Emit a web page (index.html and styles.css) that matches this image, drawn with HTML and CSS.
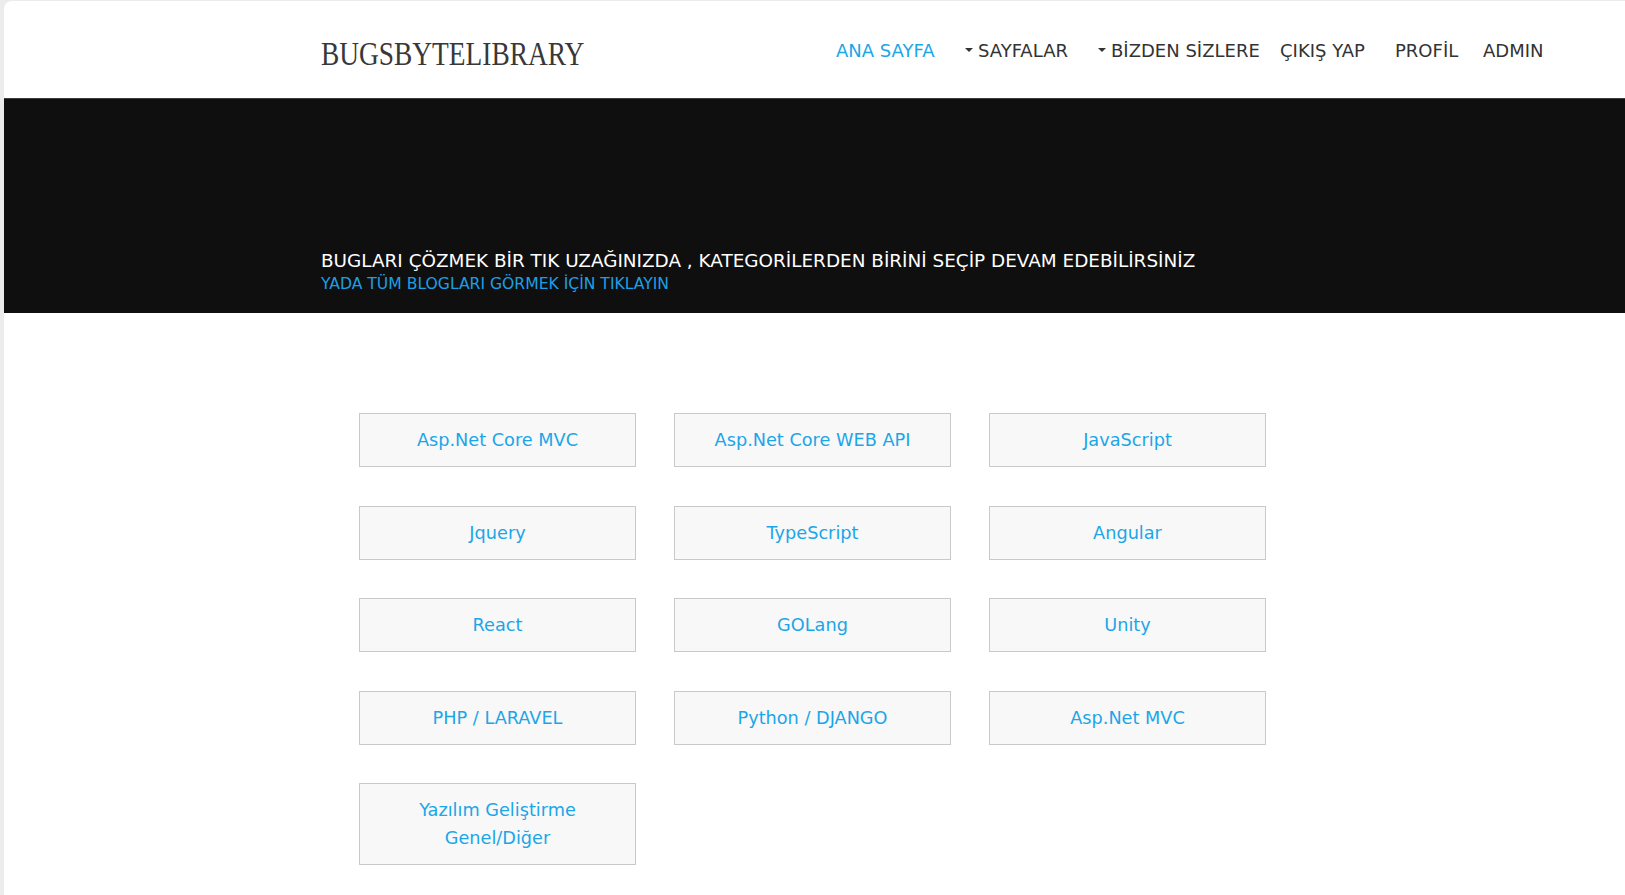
FILE: index.html
```html
<!DOCTYPE html>
<html lang="tr">
<head>
<meta charset="utf-8">
<title>BugsByteLibrary</title>
<link rel="stylesheet" href="styles.css">
</head>
<body>
<div class="page">
  <header class="topbar">
    <a class="logo" href="#"><span class="logo-text">BUGSBYTELIBRARY</span></a>
    <nav class="nav">
      <a class="nav-item nav-active w-home" href="#">ANA SAYFA</a>
      <a class="nav-item w-pages" href="#"><span class="caret"></span>SAYFALAR</a>
      <a class="nav-item w-us" href="#"><span class="caret"></span>BİZDEN SİZLERE</a>
      <a class="nav-item w-out" href="#">ÇIKIŞ YAP</a>
      <a class="nav-item w-prof" href="#">PROFİL</a>
      <a class="nav-item" href="#">ADMIN</a>
    </nav>
  </header>
  <section class="hero">
    <h1 class="hero-title">BUGLARI ÇÖZMEK BİR TIK UZAĞINIZDA , KATEGORİLERDEN BİRİNİ SEÇİP DEVAM EDEBİLİRSİNİZ</h1>
    <a class="hero-link" href="#">YADA TÜM BLOGLARI GÖRMEK İÇİN TIKLAYIN</a>
  </section>
  <main class="categories">
    <a class="cat" href="#">Asp.Net Core MVC</a>
    <a class="cat" href="#">Asp.Net Core WEB API</a>
    <a class="cat" href="#">JavaScript</a>
    <a class="cat" href="#">Jquery</a>
    <a class="cat" href="#">TypeScript</a>
    <a class="cat" href="#">Angular</a>
    <a class="cat" href="#">React</a>
    <a class="cat" href="#">GOLang</a>
    <a class="cat" href="#">Unity</a>
    <a class="cat" href="#">PHP / LARAVEL</a>
    <a class="cat" href="#">Python / DJANGO</a>
    <a class="cat" href="#">Asp.Net MVC</a>
    <a class="cat" href="#">Yazılım Geliştirme Genel/Diğer</a>
  </main>
</div>
</body>
</html>
```

FILE: styles.css
```css
html, body {
  margin: 0;
  padding: 0;
}
body {
  background: #ececec;
  font-family: "DejaVu Sans", "Liberation Sans", sans-serif;
}
a {
  text-decoration: none;
}
.page {
  margin: 1px 0 0 4px;
  background: #ffffff;
  border-top-left-radius: 8px;
  min-height: 894px;
}
.topbar {
  height: 97px;
  display: flex;
  align-items: center;
  padding-left: 317px;
}
.logo {
  width: 515px;
  color: #383838;
  font-family: "Liberation Serif", "Times New Roman", serif;
  font-size: 33px;
  line-height: 1;
  padding-top: 10px;
}
.logo-text {
  display: inline-block;
  transform: scaleX(0.83);
  transform-origin: left center;
}
.nav {
  display: flex;
  align-items: center;
  padding-top: 2px;
}
.nav-item {
  color: #333333;
  font-size: 18px;
  line-height: 24px;
  white-space: nowrap;
  display: flex;
  align-items: center;
}
.nav-active {
  color: #1ba6e8;
}
.w-home { width: 129px; }
.w-pages { width: 133px; }
.w-us { width: 182px; }
.w-out { width: 115px; }
.w-prof { width: 88px; }
.caret {
  width: 0;
  height: 0;
  border-left: 4px solid transparent;
  border-right: 4px solid transparent;
  border-top: 4px solid #333333;
  margin-right: 5px;
  margin-bottom: 2px;
}
.hero {
  background: #0f0f0f;
  border-top: 1px solid #3d3d3d;
  height: 215px;
  box-sizing: border-box;
  display: flex;
  flex-direction: column;
  justify-content: flex-end;
  padding: 0 0 18px 317px;
}
.hero-title {
  margin: 0 0 1px;
  color: #ffffff;
  font-size: 18.4px;
  font-weight: normal;
  line-height: 24px;
}
.hero-link {
  color: #1d9fe6;
  font-size: 15.6px;
  line-height: 21px;
}
.categories {
  display: grid;
  grid-template-columns: repeat(3, 277px);
  column-gap: 38px;
  row-gap: 38.5px;
  margin-left: 355px;
  padding: 100px 0 30px;
}
.cat {
  box-sizing: border-box;
  border: 1px solid #c9c9c9;
  background: #f8f8f8;
  color: #1ba6e8;
  font-size: 17.7px;
  line-height: 28px;
  padding: 12px 10px;
  text-align: center;
}
```
